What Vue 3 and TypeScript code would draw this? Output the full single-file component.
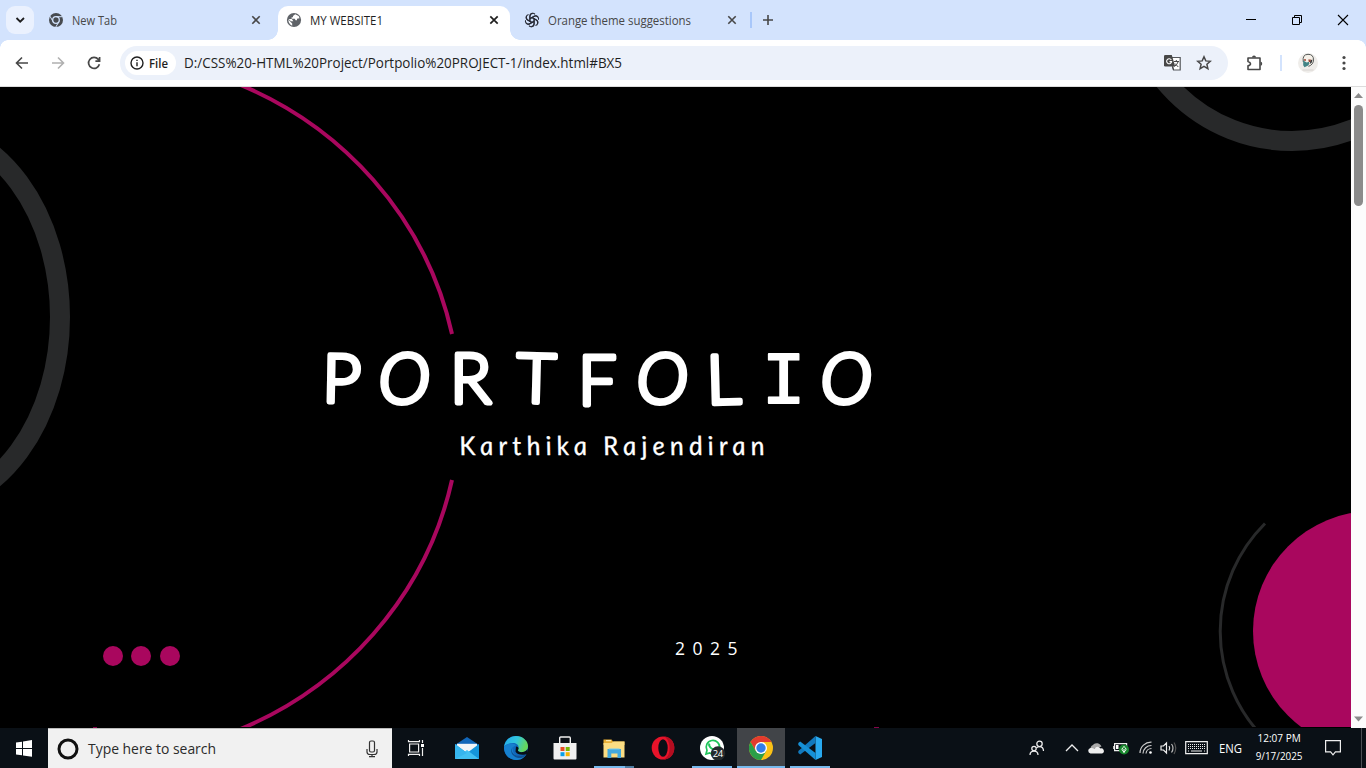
<script setup lang="ts">
import { h, type FunctionalComponent } from 'vue'

interface LabelProps {
  text: string
  w: number
  size: number
  color?: string
  weight?: number
}

// Single-line label fitted to a fixed width.
const Label: FunctionalComponent<LabelProps> = (p) =>
  h('svg', { class: 'label', width: p.w + 2, height: 20, viewBox: `0 0 ${p.w + 2} 20`, overflow: 'visible' }, [
    h(
      'text',
      {
        x: 0,
        y: 15,
        'font-size': p.size,
        'font-weight': p.weight ?? 400,
        fill: p.color ?? '#1f1f1f',
        textLength: p.w,
        lengthAdjust: 'spacingAndGlyphs',
      },
      p.text,
    ),
  ])
Label.props = ['text', 'w', 'size', 'color', 'weight']

const dots: number[] = [113, 141, 170]
const keys: number[] = [0, 1, 2]
</script>

<template>
  <div class="screen">
    <header class="tabs">
      <div class="tab-search">
        <svg width="28" height="28" viewBox="0 0 28 28"><path d="M10.5 12l3.7 3.7L18 12" fill="none" stroke="#1f1f1f" stroke-width="1.8" /></svg>
      </div>
      <div class="tab first">
        <svg class="fav" width="16" height="16" viewBox="0 0 16 16">
          <circle cx="8" cy="8" r="7" fill="#474b50" />
          <circle cx="8" cy="8" r="3.3" fill="#474b50" stroke="#d3e3fd" stroke-width="1.3" />
          <path d="M8 4.7h6.5M5.1 9.7L1.9 4.1M10.9 9.7l-3.2 5.5" stroke="#d3e3fd" stroke-width="1" />
        </svg>
        <Label text="New Tab" :w="45" :size="12.3" color="#474747" />
        <svg class="x" width="10" height="10" viewBox="0 0 10 10"><path d="M1.3 1.3l7.4 7.4M8.7 1.3L1.3 8.7" stroke="#474747" stroke-width="1.6" /></svg>
      </div>
      <div class="tab active">
        <svg class="fav" width="16" height="16" viewBox="0 0 16 16">
          <circle cx="8" cy="8" r="7.100" fill="#5f6368" />
          <path d="M9.200 2.200L7 4v1.300H5.600v1.500h3.200l.7 1.500H11V6.800l2.500-.6-.8-2.200z" fill="#fff" />
          <path d="M2.300 7.600l3.900 3.800v2.400Q2.500 12 2.300 7.600zM2.500 7h3.300l1.600 2.200H5z" fill="#fff" />
        </svg>
        <Label text="MY WEBSITE1" :w="73" :size="12.3" />
        <svg class="x" width="10" height="10" viewBox="0 0 10 10"><path d="M1.3 1.3l7.4 7.4M8.7 1.3L1.3 8.7" stroke="#1f1f1f" stroke-width="1.7" /></svg>
      </div>
      <div class="tab third">
        <svg class="fav" width="16" height="16" viewBox="0 0 16 16" fill="none" stroke="#272a35" stroke-width="1.1">
          <g v-for="n in 6" :key="n" :transform="`rotate(${n * 60} 8 8)`">
            <path d="M5.900 9.200V4.200A2.900 2.900 0 0 1 11 2.300M5.900 6.800l4.300-2.500a2.900 2.900 0 0 1 3.900 1" />
          </g>
        </svg>
        <Label text="Orange theme suggestions" :w="143" :size="12.3" color="#474747" />
        <svg class="x" width="10" height="10" viewBox="0 0 10 10"><path d="M1.3 1.3l7.4 7.4M8.7 1.3L1.3 8.7" stroke="#474747" stroke-width="1.6" /></svg>
      </div>
      <i class="tab-sep"></i>
      <svg class="plus" width="12" height="12" viewBox="0 0 12 12"><path d="M6 1v10M1 6h10" stroke="#474747" stroke-width="1.6" /></svg>
      <div class="window-buttons">
        <svg width="12" height="12" viewBox="0 0 12 12"><path d="M1 5.5h10" stroke="#000" /></svg>
        <svg width="12" height="12" viewBox="0 0 12 12" fill="none" stroke="#000"><path d="M1.5 3.5h7v7h-7zM3.5 3.5v-2h7v7h-2" /></svg>
        <svg width="12" height="12" viewBox="0 0 12 12"><path d="M1 1l10 10M11 1L1 11" stroke="#000" stroke-width="1.1" /></svg>
      </div>
    </header>

    <div class="toolbar">
      <svg class="nav" width="16" height="16" viewBox="0 0 16 16" fill="none" stroke="#474747" stroke-width="1.6"><path d="M14 8H3M8 2.5L2.5 8 8 13.5" /></svg>
      <svg class="nav" width="16" height="16" viewBox="0 0 16 16" fill="none" stroke="#b0b0b0" stroke-width="1.6"><path d="M2 8h11M8 2.5L13.500 8 8 13.500" /></svg>
      <svg class="nav" width="16" height="16" viewBox="0 0 16 16" fill="none" stroke="#474747" stroke-width="1.7"><path d="M13.400 9.300A5.500 5.500 0 1 1 12.300 4.400L13.600 5.800M13.600 2V6.100H9.400" /></svg>
      <div class="omnibox">
        <div class="chip">
          <svg width="14" height="14" viewBox="0 0 14 14" fill="none" stroke="#1f1f1f" stroke-width="1.4"><circle cx="7" cy="7" r="6" /><path d="M7 6.200v4M7 3.700v1.400" /></svg>
          <Label text="File" :w="19" :size="12" :weight="600" />
        </div>
        <Label class="url" text="D:/CSS%20-HTML%20Project/Portpolio%20PROJECT-1/index.html#BX5" :w="438" :size="13.8" />
        <svg class="translate" width="18" height="18" viewBox="0 0 18 18">
          <path d="M6.500 3.500h9.700v12.500H9.500z" fill="#fff" stroke="#55585c" stroke-width="1.200" />
          <path d="M1.300 1h6.500l3.400 11.600H1.300A1.300 1.300 0 0 1 0 11.300V2.300Q0 1 1.300 1z" fill="#474747" />
          <path d="M7.300 6A2.500 2.500 0 1 0 7.600 7.600H5.500" fill="none" stroke="#fff" stroke-width="1.100" />
          <path d="M10 7.500h5M12.300 6v1.500M14 8q-1 3-3.500 4.300M11 9.500l3.300 3.500M8.500 13l1 3" fill="none" stroke="#474747" />
        </svg>
        <svg width="16" height="16" viewBox="0 0 16 16" fill="none" stroke="#474747" stroke-width="1.500"><path d="M8 1.800l1.800 4.100 4.500.4-3.400 3 1 4.400L8 11.400l-3.900 2.300 1-4.400-3.400-3 4.500-.4z" /></svg>
      </div>
      <svg class="puzzle" width="18" height="18" viewBox="0 0 18 18"><path d="M2 4h12v11.500H2v-3.800q2.500-.5 2.500-2T2 7.500z" fill="none" stroke="#474747" stroke-width="1.600" stroke-linejoin="round" /><path d="M6 3.500a2 2 0 0 1 4 0zM14.500 7.500a2.200 2.200 0 0 1 0 4.300z" fill="#474747" /></svg>
      <i class="bar-sep"></i>
      <svg class="avatar" width="20" height="20" viewBox="0 0 20 20">
        <circle cx="10" cy="10" r="10" fill="#efedea" />
        <path d="M5.300 9Q4 1.500 10 1.300q5.600 0 5.500 5.600-.1 4.700-5 6.500" fill="#f6f1e9" stroke="#555957" stroke-width="1" />
        <path d="M5.200 7.500l3.500 2 2.600-.8-.6 3.500-4.200 2-1.300-2z" fill="#428486" />
        <circle cx="7" cy="7" r="1" fill="#9b4535" /><path d="M10.300 6.500h2.500v2.500h-2z" fill="#9b4535" /><path d="M13 7l1.500-.5-1 3.500-2 1z" fill="#33383a" />
        <path d="M4.500 17h11" stroke="#d7d3d0" />
      </svg>
      <svg class="menu" width="4" height="16" viewBox="0 0 4 16" fill="#474747"><circle cx="2" cy="2.500" r="1.600" /><circle cx="2" cy="8" r="1.600" /><circle cx="2" cy="13.500" r="1.600" /></svg>
    </div>

    <main class="viewport">
      <svg class="art" width="1351" height="641" viewBox="0 87 1351 641">
        <g fill="none">
          <ellipse cx="-80" cy="317" rx="140" ry="190" stroke="#28292a" stroke-width="20" />
          <circle cx="1292" cy="-24" r="165" stroke="#28292a" stroke-width="20" />
          <path d="M228 80A365 352 0 0 1 452 334M452 480A365 352 0 0 1 228 734" stroke="#a9075e" stroke-width="4" />
          <path d="M1265 523.500A152 152 0 0 0 1265 739" stroke="#28292a" stroke-width="3" />
        </g>
        <circle cx="1373" cy="631" r="120" fill="#a9075e" />
        <circle v-for="x in dots" :key="x" :cx="x" cy="656" r="10" fill="#a9075e" />
        <path d="M0 727h1351v1H0z" fill="#000" />
        <path d="M93 727.500h4M874 727.500h5" stroke="#850449" />
        <text class="title" y="402">
          <tspan class="narrow" x="322" rotate="1">P</tspan><tspan class="lean" x="378.500" y="402.500">O</tspan><tspan x="450" y="402.500">R</tspan><tspan class="wide" x="516" y="402" rotate="1.500">T</tspan><tspan x="578" y="404.500" rotate="0">F</tspan><tspan class="lean" x="636.500" y="402.500">O</tspan><tspan x="707" y="404" rotate="-1.500">L</tspan><tspan class="slab" x="761.500" y="403" rotate="0">I</tspan><tspan class="lean" x="820.500" y="402.500">O</tspan>
        </text>
        <text class="name" x="0" y="0" textLength="305" transform="translate(460.500 455) skewX(8)">Karthika Rajendiran</text>
        <text class="year" x="675" y="655" textLength="62.500">2025</text>
      </svg>
      <div class="scrollbar">
        <svg width="15" height="17" viewBox="0 0 15 17"><path d="M3 11L7.500 6l4.500 5z" fill="#8b8b8b" /></svg>
        <div class="thumb"></div>
        <svg class="down" width="15" height="17" viewBox="0 0 15 17"><path d="M3 5.500h9l-4.500 5z" fill="#8b8b8b" /></svg>
      </div>
    </main>

    <footer class="taskbar">
      <div class="start">
        <svg width="16" height="17" viewBox="0 0 16 17" fill="#fff"><path d="M0 2.500L6 1.700V8H0zM7 1.500L16 0v8H7zM0 9h6v6.300L0 14.500zM7 9h9v7.700L7 15.500z" /></svg>
      </div>
      <div class="search">
        <svg width="22" height="22" viewBox="0 0 22 22"><circle cx="11" cy="11" r="9" fill="none" stroke="#111" stroke-width="3" /></svg>
        <Label text="Type here to search" :w="128" :size="14.8" color="#2b2b2b" />
        <svg class="mic" width="12" height="18" viewBox="0 0 12 18" fill="none" stroke="#333" stroke-width="1.200"><rect x="3.500" y="1" width="5" height="11" rx="1.500" /><path d="M1 9v3q0 2.500 3 2.500h4q3 0 3-2.500V9M6 14.500V17M3 16.700h6" /></svg>
      </div>
      <div class="app task-view">
        <svg width="24" height="24" viewBox="0 0 24 24" fill="none" stroke="#eee" stroke-width="1.200"><path d="M5.600 8h9v8h-9zM4.500 4v1.700h11V4M4.500 20v-1.700h11V20M18.500 4v3M18.500 12v8" /><path d="M17 8h3v3h-3z" fill="#fff" stroke="none" /></svg>
      </div>
      <div class="app">
        <svg width="24" height="24" viewBox="0 0 24 24"><path d="M0 9L12 1l12 8v5H0z" fill="#1267b9" /><path d="M2 7.800h20v9H2z" fill="#f2f5f7" /><path d="M0 8l12 9L24 8v15H0z" fill="#1595da" /><path d="M0 23l12-9 12 9z" fill="#42c0f2" /><path d="M0 8l12 9L0 23z" fill="#36b5ee" /></svg>
      </div>
      <div class="app">
        <svg width="24" height="24" viewBox="0 0 24 24">
          <defs><linearGradient id="edge-wave" x2="1" y2=".3"><stop stop-color="#22a9ed" /><stop offset=".55" stop-color="#31c6de" /><stop offset="1" stop-color="#65d75b" /></linearGradient></defs>
          <circle cx="12" cy="12" r="12" fill="#1068bc" />
          <path d="M0 11C1 4 6 0 12 0c7 0 12 5 12 10 0 4-3 6-6 6-3 0-5-1-4-2.500C16 10 13 7 9 7 5 7 1 9 0 11z" fill="url(#edge-wave)" />
          <path d="M0 11q3-3.500 7-3.500 4 0 5 2c-4 1-4 5-2 8 3 4 9 3 12 1-3 5-7 5.500-10 5.500C5 24 0 18 0 11z" fill="#1680cf" />
          <path d="M11 9.700c-4 2-4 6-1 8.500 3 2.500 8 2 12.500-.2l-1.300 1.800c-3 3-8 3-11.200.2C5.500 16.500 7 11 11 9.700z" fill="#105093" />
          <path d="M12 10.500c3 .5 3 2 2 3.500-.5 1.500 2 2.500 5 2 2.500-.3 4-2 4.500-3l.3 4.200C20 20 13 19 11.500 15.500z" fill="#080f17" />
        </svg>
      </div>
      <div class="app">
        <svg width="24" height="24" viewBox="0 0 24 24"><path d="M6.700 7V2q0-1 1-1h8.600q1 0 1 1v5" fill="none" stroke="#f0f0f0" stroke-width="1.400" /><path d="M.500 7h23v15.500q0 1-1 1h-21q-1 0-1-1z" fill="#f0f0f0" /><path d="M7.500 11h4v4h-4z" fill="#e74d24" /><path d="M12.700 11h4v4h-4z" fill="#77b702" /><path d="M7.500 16.200h4v4h-4z" fill="#0aa0e8" /><path d="M12.700 16.200h4v4h-4z" fill="#f6b401" /></svg>
      </div>
      <div class="app running stacked">
        <svg width="24" height="24" viewBox="0 0 24 24"><path d="M1.500 3.500h8l1.500 2h11.500V9h-21z" fill="#e7ae35" /><path d="M1.500 7h8l2-1.500h11v16h-21z" fill="#fbdd83" /><path d="M4 4.700h5" stroke="#fff4c5" /><path d="M5.500 13h13.500v9h-3.500v-4.500H9.300V22H5.500z" fill="#42a9de" /><path d="M7 13h10.500" stroke="#75caee" /></svg>
      </div>
      <div class="app">
        <svg width="24" height="24" viewBox="0 0 24 24"><ellipse cx="12" cy="12" rx="11.300" ry="11.500" fill="#e8132a" /><path d="M13 .600C20 1 23.300 6 23.300 12S20 23 13 23.400c8-3 7-19.500 0-22.800z" fill="#b40d20" /><ellipse cx="12" cy="12" rx="4.700" ry="8.800" fill="#0a0f16" /></svg>
      </div>
      <div class="app running">
        <svg class="chat" width="26" height="24" viewBox="0 0 26 24"><circle cx="12" cy="12" r="12" fill="#fff" /><path d="M6 18l1-3.700A6.700 6.700 0 1 1 9.700 17z" fill="none" stroke="#20c45b" stroke-width="1.700" /><path d="M9.500 7.500c-1.500 2 2.500 7 5.500 5.500" fill="none" stroke="#20c45b" stroke-width="2" /><circle cx="18" cy="17.500" r="7.200" fill="#24292d" /><text x="12.800" y="21" font-size="9.500" textLength="10.500" fill="#fff">24</text></svg>
      </div>
      <div class="app running current">
        <svg width="24" height="24" viewBox="0 0 24 24"><circle cx="12" cy="12" r="12" fill="#fbc116" /><path d="M1.600 6A12 12 0 0 1 22.400 6H12l-5.200 9z" fill="#e33b2e" /><path d="M1.600 6A12 12 0 0 0 12 24l5.200-9H6.800z" fill="#2b9f48" /><circle cx="12" cy="12" r="6" fill="#fff" /><circle cx="12" cy="12" r="4.700" fill="#337de8" /></svg>
      </div>
      <div class="app running">
        <svg width="24" height="24" viewBox="0 0 24 24"><path d="M17.500 0L24 3v18l-6.500 3z" fill="#28a9ef" /><path d="M17.500 0v7L2.200 18.500.300 17v-2z" fill="#1279bd" /><path d="M17.500 24v-7L2.200 5.500.300 7v2z" fill="#1690d6" /></svg>
      </div>
      <div class="tray">
        <svg class="people" width="16" height="16" viewBox="0 0 16 16" fill="none" stroke="#eee" stroke-width="1.250"><circle cx="10.500" cy="3.800" r="2.700" /><circle cx="5" cy="8.500" r="2.200" /><path d="M1 15q0-4 4-4t4 4M7.500 8q1-1.500 3-1.500Q14.500 6.500 14.500 11" /></svg>
        <svg class="chev" width="14" height="10" viewBox="0 0 14 10"><path d="M1 8l6-6 6 6" fill="none" stroke="#eee" stroke-width="1.300" /></svg>
        <svg class="cloud" width="17" height="12" viewBox="0 0 17 12"><path d="M3 8a3.500 3.500 0 0 1 2-5 5 5 0 0 1 8.500 1.500Z" fill="#aaa" /><path d="M2.500 11.500a2.800 2.800 0 0 1 0-5.500q2-.5 4 1 2-3.500 5-1.500l1 1a2.600 2.600 0 0 1 1.500 5z" fill="#eee" /></svg>
        <svg class="battery" width="17" height="14" viewBox="0 0 17 14"><path d="M1.600 2.600h12v7h-12zM.800 5v3" fill="none" stroke="#eee" stroke-width="1.200" /><path d="M3 4h2.500v4H3z" fill="#fff" /><circle cx="11" cy="8.500" r="5" fill="#16862b" /><path d="M11 5.500q4 3 0 5.500-4-2.500 0-5.500M11 8v4" stroke="#fff" fill="none" /></svg>
        <svg class="wifi" width="14" height="14" viewBox="0 0 14 14" fill="none" stroke="#ccc" stroke-width="1.200"><path d="M1 12A11 11 0 0 1 12.500 1.200M4 12.500A8.300 8.300 0 0 1 12.500 4.500M7 12.500A5.500 5.500 0 0 1 12.500 7.500" /><circle cx="11.500" cy="11.500" r="1.300" fill="#fff" stroke="none" /></svg>
        <svg class="volume" width="17" height="14" viewBox="0 0 17 14" fill="none" stroke="#eee" stroke-width="1.200"><path d="M1 5h2.500l3-3v10l-3-3H1zM9 5q1.500 2 0 4.500" /><path d="M11.500 3q3 4 0 8.500" stroke="#bbb" /><path d="M14 1.500q3.500 5.500 0 11.500" stroke="#555" /></svg>
        <svg class="keyboard" width="23" height="14" viewBox="0 0 23 14" fill="none" stroke="#eee"><path d="M.700.700h21.600v12H.700z" stroke-width="1.200" /><path v-for="r in keys" :key="r" :d="`M3 ${3.500 + r * 2}h17`" stroke-dasharray="1 1" /><path d="M3 10h1M6 10h11M19 10h1" /></svg>
        <Label class="lang" text="ENG" :w="23" :size="12.3" color="#fff" />
        <div class="clock">
          <Label text="12:07 PM" :w="48" :size="12.8" color="#fff" />
          <Label text="9/17/2025" :w="52" :size="12.8" color="#fff" />
        </div>
        <svg class="notice" width="16" height="16" viewBox="0 0 16 16"><path d="M.600.600h14.800v11.200h-5l-2.400 3-2.400-3h-5z" fill="none" stroke="#eee" stroke-width="1.200" /></svg>
        <i class="peek"></i>
      </div>
    </footer>
  </div>
</template>

<style>
body { margin: 0; overflow: hidden; }
</style>

<style scoped>
.screen { width: 1366px; height: 768px; display: flex; flex-direction: column; overflow: hidden; background: #fff; font-family: "Open Sans", "Noto Sans", sans-serif; }
svg { display: block; flex: none; }
.tabs { height: 40px; display: flex; align-items: center; background: #d3e3fd; box-sizing: border-box; padding-left: 6px; flex: none; }
.tab-search { width: 28px; height: 28px; border-radius: 9px; background: #eaf1fe; }
.tab { display: flex; align-items: center; box-sizing: border-box; }
.tab .fav { margin-right: 8px; }
.tab .x { margin-left: auto; }
.first { width: 227px; padding-left: 14px; }
.active { position: relative; z-index: 1; width: 232px; height: 34px; align-self: flex-end; margin-left: 17px; padding: 0 11px 6px 8px; background: #fff; border-radius: 10px 10px 0 0; }
.active::before, .active::after { content: ""; position: absolute; bottom: 0; width: 10px; height: 10px; }
.active::before { left: -10px; background: radial-gradient(circle at 0 0, transparent 9.5px, #fff 10px); }
.active::after { right: -10px; background: radial-gradient(circle at 100% 0, transparent 9.5px, #fff 10px); }
.third { width: 227px; padding-left: 14px; }
.tab-sep { width: 2px; height: 16px; margin-left: 13px; background: #a8c7fa; }
.plus { margin-left: 10px; }
.window-buttons { display: flex; gap: 34px; margin: 0 17px 0 auto; }
.toolbar { height: 47px; box-sizing: border-box; flex: none; display: flex; align-items: center; padding: 0 20px 1px 14px; border-bottom: 1px solid #dcdcdc; background: radial-gradient(circle at 8px 8px, #fff 7.5px, #d3e3fd 8px) 0 0 / 8px 8px no-repeat, radial-gradient(circle at 0 8px, #fff 7.5px, #d3e3fd 8px) 100% 0 / 8px 8px no-repeat, #fff; }
.nav { margin-right: 20px; }
.omnibox { width: 1108px; height: 34px; margin-left: -2px; box-sizing: border-box; border-radius: 17px; background: #ecf1fa; display: flex; align-items: center; padding: 0 16px 0 5px; }
.chip { width: 51px; height: 24px; border-radius: 12px; background: #fff; display: flex; align-items: center; gap: 5px; box-sizing: border-box; padding-left: 5px; }
.url { margin-left: 8px; }
.translate { margin: 0 14px 0 auto; }
.puzzle { margin-left: 18px; }
.bar-sep { width: 2px; height: 16px; margin-left: 16px; background: #d3e3fd; }
.avatar { margin-left: 16px; }
.menu { margin-left: auto; }
.viewport { height: 641px; display: flex; flex: none; background: #000; }
.title { font-family: Lato, sans-serif; font-size: 68px; font-weight: 300; fill: #fff; stroke: #fff; stroke-width: 4.8px; stroke-linejoin: round; }
.narrow { font-size: 67px; }
.wide { font-size: 68px; }
.lean { font-style: italic; font-size: 70px; }
.slab { font-family: "Liberation Mono", monospace; font-size: 74px; stroke-width: 1.8px; }
.name { font-family: Lato, sans-serif; font-style: italic; font-size: 26px; fill: #fff; stroke: #fff; stroke-width: .3px; }
.year { font-size: 17.500px; fill: #fff; }
.scrollbar { width: 15px; background: #fcfcfc; display: flex; flex-direction: column; align-items: center; }
.thumb { width: 9px; height: 101px; margin-top: 1px; border-radius: 5px; background: #8b8b8b; }
.down { margin-top: auto; }
.taskbar { height: 40px; flex: none; display: flex; background: #0a1016; }
.start { width: 48px; display: flex; align-items: center; justify-content: center; }
.search { width: 344px; box-sizing: border-box; border-top: 1px solid #bbb; background: #f1f1f1; display: flex; align-items: center; padding: 0 14px 0 9px; }
.search .label { margin-left: 9px; }
.mic { margin-left: auto; }
.app { position: relative; width: 48px; margin-right: 1px; display: flex; align-items: center; justify-content: center; }
.task-view { margin-right: 3px; }
.chat { margin-left: 2px; }
.running::after { content: ""; position: absolute; left: 4px; bottom: 0; width: 40px; height: 2px; background: #76b9ed; }
.stacked::after { background: linear-gradient(90deg, #76b9ed 31px, #4d7ba0 31px); }
.current { background: #414448; }
.current::after { left: 0; width: 48px; }
.tray { flex: 1; display: flex; align-items: center; justify-content: flex-end; }
.people { margin-right: 20px; }
.chev { margin-right: 9px; }
.cloud { margin-right: 8px; }
.battery { margin-right: 9px; }
.wifi { margin-right: 7px; }
.volume { margin-right: 8px; }
.keyboard { margin-right: 11px; }
.lang { margin-right: 9px; }
.clock { display: flex; flex-direction: column; align-items: center; width: 54px; height: 40px; }
.clock .label { height: 18px; }
.notice { margin-left: 18px; }
.peek { width: 1px; height: 40px; margin: 0 4px 0 20px; background: #4b4f54; }
</style>
